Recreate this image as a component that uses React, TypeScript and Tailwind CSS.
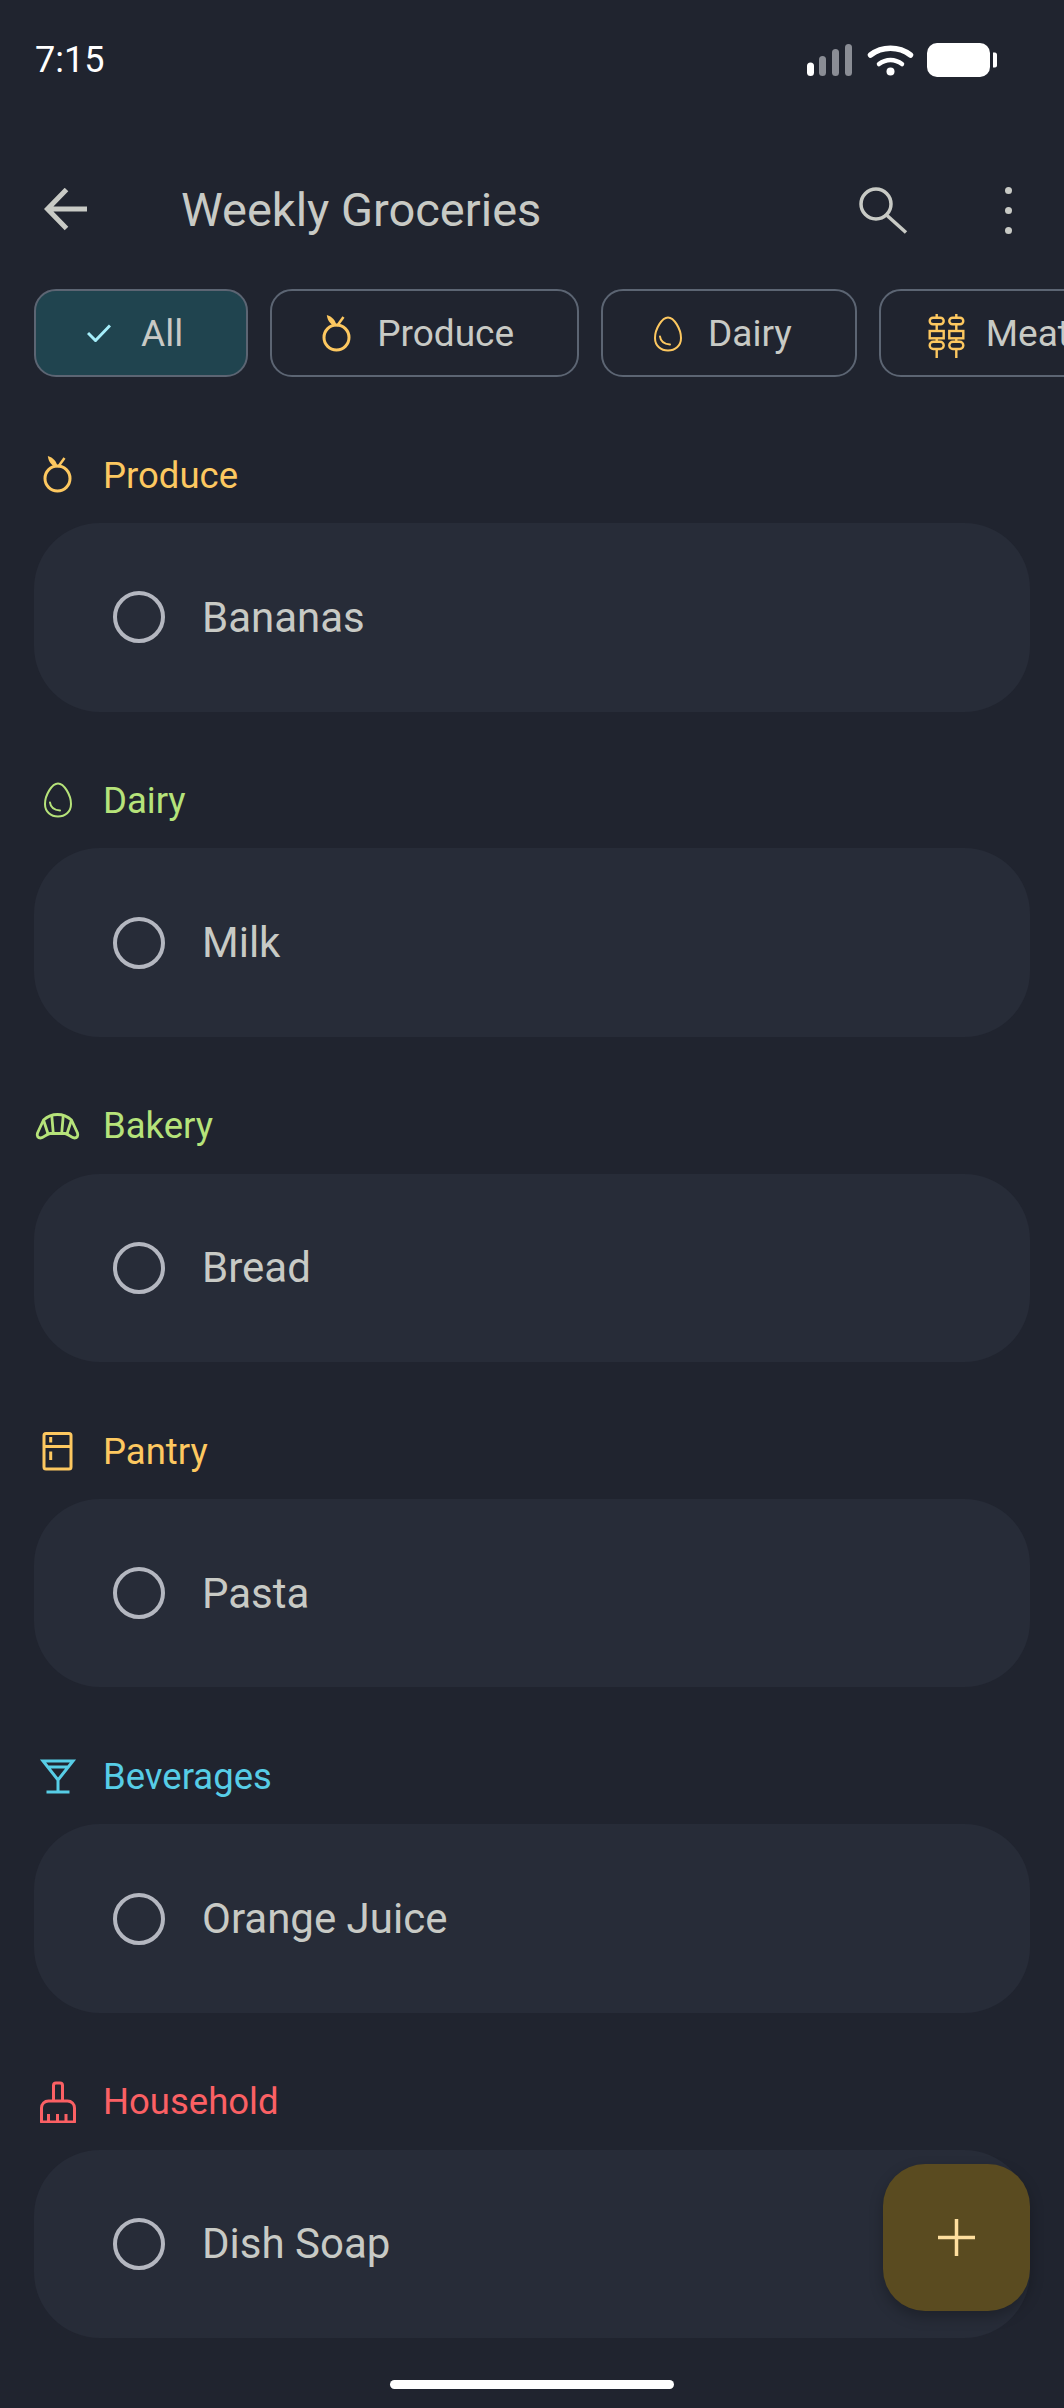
const yellow = '#fdc860'
const green = '#b6e37a'
const blue = '#57cde6'
const red = '#fb6064'

function Orange({ color, size = 44 }: { color: string; size?: number }) {
  return (
    <svg width={size} height={size} viewBox="0 0 44 44" fill="none" className="shrink-0">
      <circle cx="23.5" cy="26.5" r="12.5" stroke={color} strokeWidth="3" />
      <path d="M13.8 4C19 5.5 22.8 9.5 23.8 15.5C18.5 14.5 14.5 10.5 13.8 4Z" fill={color} />
      <path d="M24 15L30.5 6" stroke={color} strokeWidth="2.5" />
    </svg>
  )
}

function Egg({ color, width = 2 }: { color: string; width?: number }) {
  return (
    <svg width="44" height="44" viewBox="0 0 44 44" fill="none" className="shrink-0">
      <path
        d="M24 6.5C30 6.5 37 18 37 27C37 35 31 39.5 24 39.5C17 39.5 11 35 11 27C11 18 18 6.5 24 6.5Z"
        stroke={color}
        strokeWidth={width}
      />
      <path d="M16 25.5C16.5 30 20 33 26 33.5" stroke={color} strokeWidth={width} strokeLinecap="round" />
    </svg>
  )
}

function Croissant({ color }: { color: string }) {
  return (
    <svg width="44" height="44" viewBox="0 0 44 44" fill="none" className="shrink-0 overflow-visible">
      <path
        d="M9.5 17C14 13 18.5 11.5 23.5 11.5C28.5 11.5 33 13 37.5 17L43.5 30C44.5 33 43 35 40.5 35C37 35 35 31 31 30.5H16C12 31 10 35 6.500 35C4 35 2.500 33 3.500 30Z"
        stroke={color}
        strokeWidth="2.800"
        strokeLinejoin="round"
      />
      <path d="M9.5 17L14 30.800M17.700 11.800L19.300 30.500M29.300 11.800L27.700 30.500M37.500 17L33 30.800" stroke={color} strokeWidth="2.800" />
    </svg>
  )
}

function Fridge({ color }: { color: string }) {
  return (
    <svg width="44" height="44" viewBox="0 0 44 44" fill="none" className="shrink-0">
      <rect x="10" y="5.500" width="27" height="35.500" rx="2" stroke={color} strokeWidth="3" />
      <path d="M10 18.500H37M16.700 9V14.500M16.700 23.500V32" stroke={color} strokeWidth="3" />
    </svg>
  )
}

function Martini({ color }: { color: string }) {
  return (
    <svg width="44" height="44" viewBox="0 0 44 44" fill="none" className="shrink-0">
      <path
        d="M9 8H39L24 27L9 8ZM13.500 14H34.500M24 27V39M12.500 39H35.500"
        stroke={color}
        strokeWidth="3"
      />
    </svg>
  )
}

function Broom({ color }: { color: string }) {
  return (
    <svg width="44" height="44" viewBox="0 0 44 44" fill="none" className="shrink-0">
      <path
        d="M19.500 22V6.500C19.500 5 20.500 4 22 4H26C27.500 4 28.500 5 28.500 6.500V22M7.500 43V29C7.500 25 10.500 22 14.500 22H33.500C37.500 22 40.500 25 40.500 29V43H7.500ZM14.500 35V43M23.500 35V43M32 35V43"
        stroke={color}
        strokeWidth="3"
        strokeLinejoin="round"
      />
    </svg>
  )
}

function Skewers({ color }: { color: string }) {
  const stick = (x: number) => (
    <g key={x} stroke={color} strokeWidth="2.400">
      <path d={`M${x} 3V6.700M${x} 13.300V20M${x} 27.300V30.700M${x} 38V47`} />
      <rect x={x - 7} y="6.700" width="14" height="6.600" rx="3.300" />
      <rect x={x - 7} y="20" width="14" height="7.300" />
      <rect x={x - 7} y="30.700" width="14" height="7.300" rx="3.600" />
    </g>
  )
  return (
    <svg width="44" height="44" viewBox="0 0 44 44" fill="none" className="shrink-0 overflow-visible">
      {stick(14.700)}
      {stick(34.300)}
    </svg>
  )
}

function StatusIcons() {
  return (
    <svg width="190" height="34" viewBox="0 0 190 34" fill="none">
      <rect x="0" y="19.500" width="7" height="13.500" rx="3.500" fill="#ffffff" />
      <rect x="12" y="13" width="7" height="20" rx="3.500" fill="#8a8d95" />
      <rect x="25" y="6" width="7" height="27" rx="3.500" fill="#8a8d95" />
      <rect x="38" y="1" width="7" height="32" rx="3.500" fill="#8a8d95" />
      <path d="M63.500 12C75 3 92 3 103.500 12" stroke="#ffffff" strokeWidth="5.500" strokeLinecap="round" />
      <path d="M72 21C79 15.500 88 15.500 95 21" stroke="#ffffff" strokeWidth="4.500" strokeLinecap="round" />
      <circle cx="83.500" cy="28.500" r="4" fill="#ffffff" />
      <rect x="120" y="0" width="63" height="34" rx="10" fill="#ffffff" />
      <path d="M186 9.500H188C189 9.500 190 10.500 190 11.500V22.500C190 23.500 189 24.500 188 24.500H186V9.500Z" fill="#ffffff" />
    </svg>
  )
}

const chips = [
  { label: 'Produce', icon: <Orange color={yellow} /> },
  { label: 'Dairy', icon: <Egg color={yellow} /> },
  { label: 'Meat', icon: <Skewers color={yellow} /> },
]

const sections = [
  { label: 'Produce', item: 'Bananas', color: yellow, icon: <Orange color={yellow} /> },
  { label: 'Dairy', item: 'Milk', color: green, icon: <Egg color={green} /> },
  { label: 'Bakery', item: 'Bread', color: green, icon: <Croissant color={green} /> },
  { label: 'Pantry', item: 'Pasta', color: yellow, icon: <Fridge color={yellow} /> },
  { label: 'Beverages', item: 'Orange Juice', color: blue, icon: <Martini color={blue} /> },
  { label: 'Household', item: 'Dish Soap', color: red, icon: <Broom color={red} /> },
]

export default function App() {
  return (
    <div className="relative h-[2408px] w-[1064px] overflow-hidden bg-[#20242f] font-['Roboto',sans-serif] text-[#c8cac5]">
      <div className="flex h-[120px] items-center justify-between pl-[35px] pr-[67px]">
        <span className="text-[36px] text-white">7:15</span>
        <StatusIcons />
      </div>

      <div className="mt-[60px] flex h-[60px] items-center pl-[44px] pr-[52px]">
        <svg width="44" height="44" viewBox="0 0 44 44" fill="none" className="shrink-0">
          <path d="M43 21H3.500M22.500 1.500L3.500 21L22.500 40.500" stroke="#c8cac5" strokeWidth="5" />
        </svg>
        <h1 className="ml-[93px] flex-1 text-[47px] font-normal">Weekly Groceries</h1>
        <svg width="50" height="48" viewBox="0 0 50 48" fill="none" className="shrink-0">
          <circle cx="18" cy="18" r="15" stroke="#c8cac5" strokeWidth="3.500" />
          <path d="M28.500 29L48 46.500" stroke="#c8cac5" strokeWidth="3.500" />
        </svg>
        <div className="ml-[97px] flex flex-col gap-[13px]">
          <span className="size-[7px] rounded-full bg-[#c8cac5]" />
          <span className="size-[7px] rounded-full bg-[#c8cac5]" />
          <span className="size-[7px] rounded-full bg-[#c8cac5]" />
        </div>
      </div>

      <div className="mt-[49px] flex gap-[22px] overflow-hidden pl-[34px]">
        <div className="flex h-[88px] shrink-0 items-center rounded-[22px] border-[2.500px] border-[#5c6573] bg-[#20444f] pl-[51px] pr-[63px]">
          <svg width="24" height="18" viewBox="0 0 24 18" fill="none" className="shrink-0">
            <path d="M1 9L8.500 16.500L23 1.500" stroke="#a5eefa" strokeWidth="3" />
          </svg>
          <span className="ml-[30px] pt-[2px] text-[37px]">All</span>
        </div>
        {chips.map((chip) => (
          <div
            key={chip.label}
            className="flex h-[88px] shrink-0 items-center gap-[20px] rounded-[22px] border-[2.500px] border-[#5c6573] pl-[41px] pr-[63px]"
          >
            {chip.icon}
            <span className="pt-[2px] text-[37px]">{chip.label}</span>
          </div>
        ))}
      </div>

      <div className="flex flex-col gap-[65.83px] px-[34px] pt-[75px]">
        {sections.map((section) => (
          <div key={section.label}>
            <div className="flex h-[44px] items-center gap-[25px]">
              {section.icon}
              <span className="pt-[4px] text-[36.500px]" style={{ color: section.color }}>
                {section.label}
              </span>
            </div>
            <div className="mt-[27px] flex h-[188.500px] items-center rounded-[66px] bg-[#272c38] pl-[79px]">
              <span className="size-[52px] rounded-full border-[4px] border-[#b4b7c0]" />
              <span className="ml-[37px] text-[42px]">{section.item}</span>
            </div>
          </div>
        ))}
      </div>

      <button className="absolute left-[883px] top-[2164px] flex size-[147px] items-center justify-center rounded-[42px] bg-[#5a4b20] shadow-[0_6px_14px_rgba(0,0,0,0.25)]">
        <svg width="37" height="37" viewBox="0 0 37 37" fill="none">
          <path d="M18.500 0V37M0 18.500H37" stroke="#ffdf9e" strokeWidth="3.500" />
        </svg>
      </button>

      <div className="absolute left-[390px] top-[2380px] h-[9px] w-[284px] rounded-full bg-white" />
    </div>
  )
}
